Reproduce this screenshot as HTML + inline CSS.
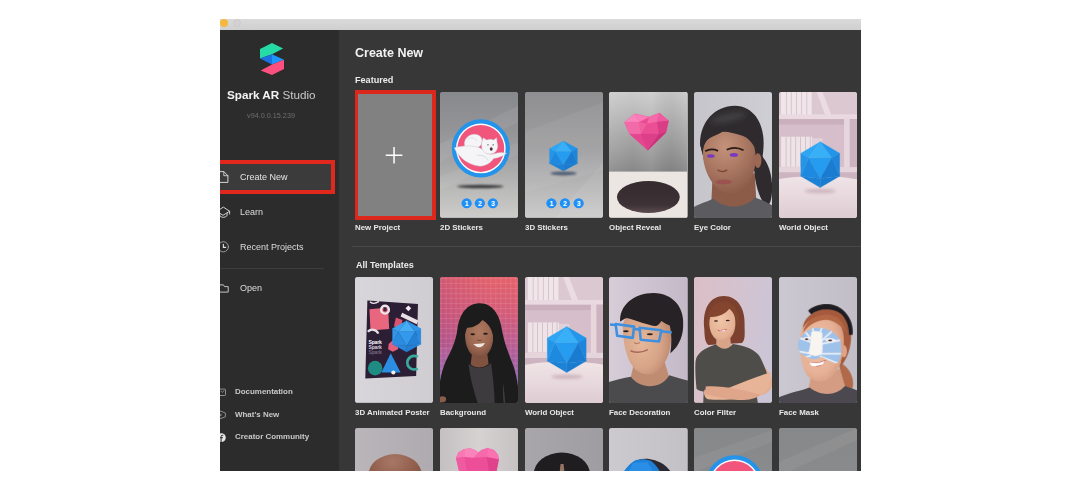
<!DOCTYPE html>
<html lang="en">
<head>
<meta charset="utf-8">
<title>Spark AR Studio</title>
<style>
html,body{margin:0;padding:0;background:#fff;}
body{width:1080px;height:490px;position:relative;overflow:hidden;font-family:"Liberation Sans",sans-serif;}
#win{filter:blur(0.5px);position:absolute;left:0;top:0;width:1080px;height:490px;clip-path:inset(19px 219.4px 19.3px 220px);}
#tbar{position:absolute;left:200px;top:9px;width:680px;height:21.2px;background:linear-gradient(#dadada 0,#dadada 10px,#cfcfcf 21.2px);}
#side{position:absolute;left:200px;top:30px;width:138.8px;height:460px;background:#2c2c2c;}
#main{position:absolute;left:338.8px;top:30px;width:542px;height:460px;background:#373737;}
.t{position:absolute;white-space:nowrap;line-height:1;will-change:transform;}
.card{position:absolute;width:78.2px;height:125.6px;border-radius:2.8px;overflow:hidden;background:#999;}
.card svg{position:absolute;left:0;top:0;width:78.2px;height:125.6px;display:block;}
.ico{position:absolute;overflow:visible;}
</style>
</head>
<body>
<div id="win">
<div id="tbar"></div>
<div style="position:absolute;left:220.4px;top:19.2px;width:8px;height:8px;border-radius:50%;background:#f6b73a;"></div>
<div style="position:absolute;left:233.9px;top:19.8px;width:6.6px;height:6.6px;border-radius:50%;background:#d4d1d4;box-shadow:0 0 0 0.5px #c4c1c4;"></div>
<div id="side"></div>
<div id="main"></div>
<div style="position:absolute;left:220px;top:162.5px;width:113px;height:29px;background:#3b3b3b;"></div>
<svg class="ico" style="left:259.9px;top:42.7px;" width="24" height="32.2" viewBox="259.9 42.7 24 32.2">
  <polygon points="259.9,48.7 271.9,42.7 283,48.3 271.9,53.9 259.9,58.1" fill="#25dba6"/>
  <polygon points="259.9,58.1 271.9,53.9 271.9,64.1" fill="#1a73e0"/>
  <polygon points="271.9,53.9 283.9,59.4 271.9,64.1" fill="#1e95ff"/>
  <polygon points="260.6,70.1 271.9,64.1 283.9,59.4 283.9,68.8 271.9,74.8" fill="#ff4f7e"/>
</svg>
<div class="t" style="left:226.6px;top:89.4px;font-size:11.7px;color:#c9c9c9;"><b style="color:#f3f3f3;">Spark AR</b> Studio</div>
<div class="t" style="left:247px;top:111.5px;font-size:7.25px;color:#6e6e6e;">v94.0.0.15.239</div>
<div class="t" style="left:239.9px;top:172.8px;font-size:9px;color:#e4e4e4;">Create New</div>
<div class="t" style="left:239.7px;top:207.6px;font-size:9px;color:#dcdcdc;">Learn</div>
<div class="t" style="left:239.7px;top:242.9px;font-size:9px;color:#dcdcdc;">Recent Projects</div>
<div style="position:absolute;left:220px;top:267.6px;width:104px;height:1px;background:#3d3d3d;"></div>
<div class="t" style="left:239.7px;top:283.9px;font-size:9px;color:#dcdcdc;">Open</div>
<div class="t" style="left:234.8px;top:387.7px;font-size:7.95px;font-weight:bold;color:#c9c9c9;">Documentation</div>
<div class="t" style="left:234.8px;top:410.6px;font-size:7.95px;font-weight:bold;color:#c9c9c9;">What's New</div>
<div class="t" style="left:234.8px;top:433px;font-size:7.95px;font-weight:bold;color:#c9c9c9;">Creator Community</div>
<svg class="ico" style="left:210px;top:160px;" width="30" height="290" viewBox="210 160 30 290" fill="none" stroke-linejoin="round" stroke-linecap="round">
  <g stroke="#d6d3d8" stroke-width="1">
    <path d="M216,171.6 H223.8 L227.9,175.7 V182.4 H216"/>
    <path d="M223.8,171.6 V175.7 H227.9" stroke-width="0.9"/>
  </g>
  <g stroke="#cfcfcf" stroke-width="1">
    <path d="M217,211.2 L223.35,207.1 L229.6,211.2 L223.35,215.1 Z"/>
    <path d="M219.6,213.4 V215.6 Q223.35,219.2 227.1,215.6 V213.4"/>
    <path d="M229.6,211.4 V214"/>
  </g>
  <circle cx="223.35" cy="246.8" r="5.1" stroke="#9c9c9c" stroke-width="1"/>
  <path d="M223.35,244.2 V247.4 H225.7" stroke="#e4e4e4" stroke-width="1.1"/>
  <path d="M216,284.9 H223.5 L224.5,286.6 H228.2 V292.1 H216" stroke="#c4c4c4" stroke-width="1"/>
  <g stroke="#a9a9a9" stroke-width="0.8">
    <rect x="216.5" y="389.1" width="9" height="6.4" rx="0.8"/>
    <path d="M221,391.2 L222.2,392.4 L224,390.8" stroke-width="0.7"/>
    <path d="M221,411.2 L225.4,413 V416.8 L221,418.5 L216.6,416.8 V413 Z"/>
    <path d="M220.2,414 L221.6,414.9 L220.2,415.8" stroke-width="0.7"/>
  </g>
  <circle cx="221.4" cy="437.6" r="4.4" fill="#e6e6e6" stroke="none"/>
  <path d="M222.9,435.3 H222.1 Q221.1,435.3 221.1,436.4 V442 M220,437.7 H222.6" stroke="#2c2c2c" stroke-width="1"/>
</svg>
<div class="t" style="left:355.0px;top:47.32px;font-size:12.5px;font-weight:bold;color:#f2f2f2;">Create New</div>
<div class="t" style="left:355.0px;top:75.60px;font-size:9.1px;font-weight:bold;color:#ededed;">Featured</div>
<div class="t" style="left:355.6px;top:260.78px;font-size:9.0px;font-weight:bold;color:#ededed;">All Templates</div>
<div style="position:absolute;left:352px;top:246px;width:509px;height:1px;background:#484848;"></div>
<div class="card" style="left:355.28px;top:92.0px;"><svg viewBox="0 0 78.1 125.3" preserveAspectRatio="none"><rect width="78.1" height="125.3" fill="#818181"/><path d="M30.7 63.1H47.3M39 54.9V71.3" stroke="#fff" stroke-width="1.5" fill="none"/></svg>
</div>
<div class="card" style="left:355.28px;top:277.0px;"><svg viewBox="0 0 78.1 125.3" preserveAspectRatio="none">
<defs>
<linearGradient id="g21" x1="0" y1="0" x2="1" y2="0"><stop offset="0" stop-color="#d8d6da"/><stop offset="1" stop-color="#cfcdd2"/></linearGradient>
</defs>
<rect width="78.1" height="125.3" fill="url(#g21)"/>
<g transform="translate(-0.6,-1.1) scale(0.2592)">
<polygon points="50,95 245,108 238,385 42,395" fill="#2b1e35"/>
<polygon points="58,128 130,122 134,204 62,210" fill="#e9667f"/>
<circle cx="118" cy="130" r="15" fill="none" stroke="#efe6ea" stroke-width="9"/>
<circle cx="118" cy="130" r="7" fill="#3a2a40"/>
<path d="M60,100 Q75,112 95,98" stroke="#e8e0e6" stroke-width="5" fill="none"/>
<path d="M52,215 A24,24 0 0 1 92,222" stroke="#e6dee4" stroke-width="9" fill="none"/>
<polygon points="184,142 246,172 240,186 178,156" fill="#eadfe6"/>
<polygon points="208,114 219,125 208,136 197,125" fill="#f2ecf0"/>
<polygon points="160,160 185,170 180,200 152,195" fill="#d9546f"/>
<polygon points="132,262 150,246 170,258 168,282 148,292 130,282" fill="#e45f7c"/>
<circle cx="80" cy="355" r="28" fill="#1f8c84"/>
<polygon points="140,298 178,372 104,372" fill="#2b8ee2"/>
<circle cx="150" cy="372" r="8" fill="#f4f0f2"/>
<path d="M244,312 A26,26 0 1 0 244,356" stroke="#3aa99d" stroke-width="11" fill="none"/>
<g font-family="Liberation Sans, sans-serif" font-size="19.5" font-weight="bold" letter-spacing="-0.5"><text x="54" y="262" fill="#fff">Spark</text><text x="54" y="281" fill="#d9d2dc">Spark</text><text x="54" y="300" fill="#75697d">Spark</text></g>
</g>
<g><polygon points="43.08,54.52 60.12,54.52 51.60,43.60" fill="#46acf4" stroke="#46acf4" stroke-width="0.25"/><polygon points="43.08,54.52 60.12,54.52 51.60,68.56" fill="#3399ec" stroke="#3399ec" stroke-width="0.25"/><polygon points="43.08,54.52 51.60,43.60 37.40,51.40" fill="#3ba2f0" stroke="#3ba2f0" stroke-width="0.25"/><polygon points="60.12,54.52 51.60,43.60 65.80,51.40" fill="#2f95e8" stroke="#2f95e8" stroke-width="0.25"/><polygon points="43.08,54.52 37.40,51.40 37.40,67.00" fill="#3196e8" stroke="#3196e8" stroke-width="0.25"/><polygon points="60.12,54.52 65.80,51.40 65.80,67.00" fill="#2889de" stroke="#2889de" stroke-width="0.25"/><polygon points="43.08,54.52 37.40,67.00 51.60,68.56" fill="#2b8ce0" stroke="#2b8ce0" stroke-width="0.25"/><polygon points="60.12,54.52 65.80,67.00 51.60,68.56" fill="#2380d4" stroke="#2380d4" stroke-width="0.25"/><polygon points="51.60,68.56 37.40,67.00 51.60,74.80" fill="#2785da" stroke="#2785da" stroke-width="0.25"/><polygon points="51.60,68.56 65.80,67.00 51.60,74.80" fill="#2380d4" stroke="#2380d4" stroke-width="0.25"/></g>
</svg>
</div>
<div class="card" style="left:355.28px;top:428.1px;"><svg viewBox="0 0 78.1 125.3" preserveAspectRatio="none">
<defs><linearGradient id="g31" x1="0" y1="0" x2="1" y2="0"><stop offset="0" stop-color="#b9b5b9"/><stop offset="1" stop-color="#aeaaaf"/></linearGradient>
<radialGradient id="h31" cx="0.45" cy="0.18" r="0.8"><stop offset="0" stop-color="#a87866"/><stop offset="0.5" stop-color="#93604f"/><stop offset="1" stop-color="#7a4a3a"/></radialGradient>
<filter id="e31"><feGaussianBlur stdDeviation="0.5"/></filter></defs>
<rect width="78.1" height="125.3" fill="url(#g31)"/>
<ellipse cx="40.1" cy="46.5" rx="26.5" ry="20.5" fill="url(#h31)" filter="url(#e31)"/>
</svg>
</div>
<div class="t" style="left:355.3px;top:224.21px;font-size:7.9px;font-weight:bold;color:#e9e9e9;">New Project</div>
<div class="t" style="left:355.3px;top:408.51px;font-size:7.9px;font-weight:bold;color:#e9e9e9;">3D Animated Poster</div>
<div class="card" style="left:440.00px;top:92.0px;"><svg viewBox="0 0 78.1 125.3" preserveAspectRatio="none">
<defs>
<linearGradient id="g12" x1="0" y1="0" x2="0" y2="1"><stop offset="0" stop-color="#87898d"/><stop offset="0.3" stop-color="#949497"/><stop offset="0.55" stop-color="#a4a4a6"/><stop offset="0.78" stop-color="#babab9"/><stop offset="1" stop-color="#cdccca"/></linearGradient>
<filter id="b12" x="-20%" y="-200%" width="140%" height="500%"><feGaussianBlur stdDeviation="0.9"/></filter>
</defs>
<rect width="78.1" height="125.3" fill="url(#g12)"/>
<polygon points="0,52 78.1,14 78.1,30 0,70" fill="#fff" opacity="0.07"/>
<polygon points="0,85 78.1,50 78.1,62 0,98" fill="#fff" opacity="0.06"/>
<ellipse cx="40.3" cy="94.3" rx="23" ry="1.7" fill="#2e2e30" filter="url(#b12)" opacity="0.9"/>
<circle cx="40.8" cy="56.3" r="29" fill="#2493ea"/>
<circle cx="40.8" cy="56.3" r="24.8" fill="#fff"/>
<circle cx="40.8" cy="56.3" r="23.4" fill="#f2557c"/>
<g transform="translate(7.8,22) scale(0.1347)">
<g fill="#f5f5f7" stroke="#c4c4ce" stroke-width="3" stroke-linejoin="round">
<path d="M128,246 C110,200 140,158 190,150 C235,146 262,176 252,214 C246,240 222,252 200,246 Z"/>
<path d="M48,250 C90,236 150,232 200,240 C240,246 262,262 280,285 C300,300 330,300 350,292 C380,284 410,282 436,290 C410,312 372,326 340,330 C320,362 280,386 240,386 C180,384 120,350 84,306 C66,286 54,268 48,250 Z"/>
<path d="M252,212 L262,176 L288,192 C304,184 326,184 340,192 L362,176 L366,214 C376,240 368,272 344,288 C318,302 280,298 262,274 C250,256 248,232 252,212 Z"/>
</g>
<path d="M150,186 C170,170 205,172 215,200" stroke="#c4c4ce" stroke-width="3" fill="none"/>
<path d="M214,306 C250,300 290,316 300,346" stroke="#b9b9c4" stroke-width="3.5" fill="none"/>
<circle cx="298" cy="228" r="5" fill="#333"/><circle cx="336" cy="228" r="5" fill="#333"/>
<ellipse cx="322" cy="258" rx="11" ry="13" fill="#4a3340"/>
<ellipse cx="322" cy="244" rx="5" ry="3.5" fill="#e58aa0"/>
</g>
<g fill="#1e90f5"><circle cx="26.6" cy="111" r="5.1"/><circle cx="39.8" cy="111" r="5.1"/><circle cx="52.8" cy="111" r="5.1"/></g>
<g fill="#fff" font-family="Liberation Sans, sans-serif" font-size="7" font-weight="bold" text-anchor="middle"><text x="26.6" y="113.5">1</text><text x="39.8" y="113.5">2</text><text x="52.8" y="113.5">3</text></g>
</svg>
</div>
<div class="card" style="left:440.00px;top:277.0px;"><svg viewBox="0 0 78.1 125.3" preserveAspectRatio="none">
<defs>
<linearGradient id="g22" x1="0" y1="0" x2="0" y2="1"><stop offset="0" stop-color="#e4626a"/><stop offset="0.3" stop-color="#d25c7a"/><stop offset="0.6" stop-color="#b05e98"/><stop offset="0.85" stop-color="#8c68b6"/><stop offset="1" stop-color="#7c6cc0"/></linearGradient>
<linearGradient id="h22" x1="0" y1="0" x2="1" y2="0"><stop offset="0" stop-color="#a8447e" stop-opacity="0.32"/><stop offset="0.65" stop-color="#b04a86" stop-opacity="0"/></linearGradient>
<pattern id="p22" width="4.97" height="4.97" patternUnits="userSpaceOnUse" x="0.6" y="1.1"><path d="M0,0.25H4.97M0.25,0V4.97" stroke="#ffd6dc" stroke-opacity="0.36" stroke-width="0.45" fill="none"/></pattern>
<radialGradient id="s22" cx="0.5" cy="0.35" r="0.7"><stop offset="0" stop-color="#b07a60"/><stop offset="0.6" stop-color="#9a6751"/><stop offset="1" stop-color="#74493a"/></radialGradient>
<filter id="f22"><feGaussianBlur stdDeviation="1.6"/></filter>
<filter id="e22"><feGaussianBlur stdDeviation="1.4"/></filter>
</defs>
<rect width="78.1" height="125.3" fill="url(#g22)"/>
<rect width="78.1" height="70" fill="url(#h22)"/>
<rect width="78.1" height="125.3" fill="url(#p22)"/>
<g transform="scale(0.2552)" filter="url(#e22)">
<path d="M152,103 C206,100 236,150 244,215 C254,270 276,315 290,355 C302,395 308,440 312,500 L-6,500 C-8,440 0,385 22,330 C46,285 62,250 68,205 C76,150 100,106 152,103 Z" fill="#1e1b1c"/>
<path d="M112,340 C140,362 175,360 200,336 C230,345 250,380 256,500 L100,500 C98,420 100,370 112,340 Z" fill="#3c3b3e"/>
<path d="M126,292 L184,292 L190,340 C168,358 140,358 120,342 Z" fill="#7f5241"/>
<path d="M98,228 C98,186 120,162 154,162 C188,162 208,188 208,236 C208,278 186,316 154,316 C120,316 98,274 98,228 Z" fill="url(#s22)"/>
<path d="M92,262 C82,200 108,140 154,138 C200,140 222,200 212,262 C210,218 196,184 166,168 C150,190 122,200 106,198 C98,215 94,240 92,262 Z" fill="#1e1b1c"/>
<g filter="url(#f22)">
<path d="M130,262 Q152,262 176,258 Q158,290 130,262 Z" fill="#f1e6e0"/>
<ellipse cx="128" cy="224" rx="9" ry="4" fill="#2a1a18"/><ellipse cx="178" cy="222" rx="9" ry="4" fill="#2a1a18"/>
<path d="M146,246 Q154,251 162,246" stroke="#6e4536" stroke-width="4" fill="none"/>
</g>
<path d="M56,330 C70,380 90,430 84,500 L150,500 C130,440 116,385 112,340 Z M258,330 C252,380 240,430 250,500 L214,500 C214,440 206,385 200,336 Z" fill="#1e1b1c"/>
<ellipse cx="10" cy="478" rx="14" ry="12" fill="#8a5c4a"/>
</g>
</svg>
</div>
<div class="card" style="left:440.00px;top:428.1px;"><svg viewBox="0 0 78.1 125.3" preserveAspectRatio="none">
<defs><linearGradient id="g32" x1="0" y1="0" x2="1" y2="0"><stop offset="0" stop-color="#c4c0c1"/><stop offset="0.5" stop-color="#d6d2d2"/><stop offset="1" stop-color="#c6c2c3"/></linearGradient></defs>
<rect width="78.1" height="125.3" fill="url(#g32)"/>
<g stroke-width="0.25">
<polygon points="16.1,30.0 18.5,24.5 24.0,21.3 30.3,20.5 35.8,22.6 38.2,24.8 41.3,22.1 47.6,20.1 53.9,22.1 57.8,26.8 58.6,31.5 56.3,43.3 38.2,60.7 19.3,43.3" fill="#ee4f98" stroke="#ee4f98"/>
<polygon points="16.1,30.0 18.5,24.5 24.0,21.3 24.8,29.2" fill="#f978b4" stroke="#f978b4"/>
<polygon points="24.0,21.3 30.3,20.5 35.8,22.6 38.2,24.8 33.4,30.0 24.8,29.2" fill="#fb84bc" stroke="#fb84bc"/>
<polygon points="38.2,24.8 41.3,22.1 47.6,20.1 46.8,29.2 33.4,30.0" fill="#f66aab" stroke="#f66aab"/>
<polygon points="47.6,20.1 53.9,22.1 57.8,26.8 58.6,31.5 46.8,29.2" fill="#f873b0" stroke="#f873b0"/>
<polygon points="16.1,30.0 24.8,29.2 27.1,43.3 19.3,43.3" fill="#f05aa0" stroke="#f05aa0"/>
<polygon points="24.8,29.2 33.4,30.0 46.8,29.2 49.2,43.3 27.1,43.3" fill="#ec4e97" stroke="#ec4e97"/>
<polygon points="46.8,29.2 58.6,31.5 56.3,43.3 49.2,43.3" fill="#e0428b" stroke="#e0428b"/>
</g>
</svg>
</div>
<div class="t" style="left:440.0px;top:224.21px;font-size:7.9px;font-weight:bold;color:#e9e9e9;">2D Stickers</div>
<div class="t" style="left:440.0px;top:408.51px;font-size:7.9px;font-weight:bold;color:#e9e9e9;">Background</div>
<div class="card" style="left:524.72px;top:92.0px;"><svg viewBox="0 0 78.1 125.3" preserveAspectRatio="none">
<defs>
<linearGradient id="g13" x1="0" y1="0" x2="0" y2="1"><stop offset="0" stop-color="#8f8f91"/><stop offset="0.45" stop-color="#9f9fa1"/><stop offset="0.72" stop-color="#b4b4b5"/><stop offset="1" stop-color="#cbcbcb"/></linearGradient>
<filter id="b13" x="-30%" y="-300%" width="160%" height="700%"><feGaussianBlur stdDeviation="1.3"/></filter>
</defs>
<rect width="78.1" height="125.3" fill="url(#g13)"/>
<polygon points="0,40 78.1,10 78.1,78 0,100" fill="#fff" opacity="0.05"/>
<polygon points="30,125.3 78.1,70 78.1,125.3" fill="#fff" opacity="0.07"/>
<ellipse cx="38.5" cy="81.2" rx="13" ry="2" fill="#3c4f66" filter="url(#b13)" opacity="0.85"/>
<g><polygon points="30.06,59.43 46.74,59.43 38.40,49.00" fill="#38b0f8" stroke="#38b0f8" stroke-width="0.25"/><polygon points="30.06,59.43 46.74,59.43 38.40,72.84" fill="#259cf0" stroke="#259cf0" stroke-width="0.25"/><polygon points="30.06,59.43 38.40,49.00 24.50,56.45" fill="#2ea6f4" stroke="#2ea6f4" stroke-width="0.25"/><polygon points="46.74,59.43 38.40,49.00 52.30,56.45" fill="#2196ea" stroke="#2196ea" stroke-width="0.25"/><polygon points="30.06,59.43 24.50,56.45 24.50,71.35" fill="#2496ea" stroke="#2496ea" stroke-width="0.25"/><polygon points="46.74,59.43 52.30,56.45 52.30,71.35" fill="#1c86dc" stroke="#1c86dc" stroke-width="0.25"/><polygon points="30.06,59.43 24.50,71.35 38.40,72.84" fill="#1d8ae0" stroke="#1d8ae0" stroke-width="0.25"/><polygon points="46.74,59.43 52.30,71.35 38.40,72.84" fill="#197cd0" stroke="#197cd0" stroke-width="0.25"/><polygon points="38.40,72.84 24.50,71.35 38.40,78.80" fill="#1c82d6" stroke="#1c82d6" stroke-width="0.25"/><polygon points="38.40,72.84 52.30,71.35 38.40,78.80" fill="#197cd0" stroke="#197cd0" stroke-width="0.25"/></g>
<g fill="#1e90f5"><circle cx="26.4" cy="111" r="5.1"/><circle cx="39.9" cy="111" r="5.1"/><circle cx="53.6" cy="111" r="5.1"/></g>
<g fill="#fff" font-family="Liberation Sans, sans-serif" font-size="7" font-weight="bold" text-anchor="middle"><text x="26.4" y="113.5">1</text><text x="39.9" y="113.5">2</text><text x="53.6" y="113.5">3</text></g>
</svg>
</div>
<div class="card" style="left:524.72px;top:277.0px;"><svg viewBox="0 0 78.1 125.3" preserveAspectRatio="none">
<defs>
<linearGradient id="t23" x1="0" y1="0" x2="0" y2="1"><stop offset="0" stop-color="#f0e4e7"/><stop offset="1" stop-color="#dccbd1"/></linearGradient>
<filter id="b23" x="-30%" y="-100%" width="160%" height="300%"><feGaussianBlur stdDeviation="6"/></filter>
<filter id="k23"><feGaussianBlur stdDeviation="1.6"/></filter>
</defs>
<rect width="78.1" height="125.3" fill="#d9c3cd"/>
<g transform="translate(-0.8,-0.3) scale(0.2592)">
<g filter="url(#k23)">
<rect x="0" y="0" width="320" height="95" fill="#dcc8d1"/>
<rect x="14" y="0" width="118" height="92" fill="#f0e5e9"/>
<g fill="#d3bcc6"><rect x="33" y="0" width="3" height="92"/><rect x="52" y="0" width="3" height="92"/><rect x="72" y="0" width="3" height="92"/><rect x="92" y="0" width="3" height="92"/><rect x="112" y="0" width="3" height="92"/></g>
<polygon points="150,0 172,0 208,92 184,92" fill="#eadce2"/>
<rect x="0" y="90" width="320" height="18" fill="#ead9e0"/>
<rect x="0" y="108" width="320" height="22" fill="#c9b0bc"/>
<rect x="0" y="130" width="320" height="170" fill="#d6bfca"/>
<rect x="14" y="176" width="120" height="116" fill="#eee3e7"/>
<rect x="134" y="182" width="40" height="110" fill="#e2d1d9"/>
<g fill="#cfb8c2"><rect x="32" y="176" width="3" height="116"/><rect x="50" y="176" width="3" height="116"/><rect x="69" y="176" width="3" height="116"/><rect x="88" y="176" width="3" height="116"/><rect x="107" y="176" width="3" height="116"/><rect x="125" y="176" width="3" height="116"/></g>
<rect x="257" y="100" width="22" height="205" fill="#e8d6de"/>
<rect x="279" y="108" width="41" height="190" fill="#cdb3bf"/>
<rect x="0" y="293" width="320" height="20" fill="#e6d4db"/>
<rect x="0" y="313" width="320" height="30" fill="#ccb4c0"/>
<path d="M-20,345 C60,322 250,322 330,345 L330,500 L-20,500 Z" fill="url(#t23)"/>
</g>
<ellipse cx="165" cy="385" rx="60" ry="9" fill="#b99aa6" opacity="0.55" filter="url(#b23)"/>
</g>
<g><polygon points="30.06,65.53 53.34,65.53 41.70,49.50" fill="#38b0f8" stroke="#38b0f8" stroke-width="0.25"/><polygon points="30.06,65.53 53.34,65.53 41.70,86.14" fill="#259cf0" stroke="#259cf0" stroke-width="0.25"/><polygon points="30.06,65.53 41.70,49.50 22.30,60.95" fill="#2ea6f4" stroke="#2ea6f4" stroke-width="0.25"/><polygon points="53.34,65.53 41.70,49.50 61.10,60.95" fill="#2196ea" stroke="#2196ea" stroke-width="0.25"/><polygon points="30.06,65.53 22.30,60.95 22.30,83.85" fill="#2496ea" stroke="#2496ea" stroke-width="0.25"/><polygon points="53.34,65.53 61.10,60.95 61.10,83.85" fill="#1c86dc" stroke="#1c86dc" stroke-width="0.25"/><polygon points="30.06,65.53 22.30,83.85 41.70,86.14" fill="#1d8ae0" stroke="#1d8ae0" stroke-width="0.25"/><polygon points="53.34,65.53 61.10,83.85 41.70,86.14" fill="#197cd0" stroke="#197cd0" stroke-width="0.25"/><polygon points="41.70,86.14 22.30,83.85 41.70,95.30" fill="#1c82d6" stroke="#1c82d6" stroke-width="0.25"/><polygon points="41.70,86.14 61.10,83.85 41.70,95.30" fill="#197cd0" stroke="#197cd0" stroke-width="0.25"/></g>
</svg>
</div>
<div class="card" style="left:524.72px;top:428.1px;"><svg viewBox="0 0 78.1 125.3" preserveAspectRatio="none">
<defs><linearGradient id="g33" x1="0" y1="0" x2="1" y2="0"><stop offset="0" stop-color="#a9a6ab"/><stop offset="1" stop-color="#9f9ca2"/></linearGradient></defs>
<rect width="78.1" height="125.3" fill="url(#g33)"/>
<ellipse cx="36.8" cy="46" rx="28" ry="21.5" fill="#1f1d20"/>
<path d="M35.5,36 L38.5,36 L39.5,45 L34.5,45Z" fill="#b58a78" opacity="0.8"/>
</svg>
</div>
<div class="t" style="left:524.7px;top:224.21px;font-size:7.9px;font-weight:bold;color:#e9e9e9;">3D Stickers</div>
<div class="t" style="left:524.7px;top:408.51px;font-size:7.9px;font-weight:bold;color:#e9e9e9;">World Object</div>
<div class="card" style="left:609.44px;top:92.0px;"><svg viewBox="0 0 78.1 125.3" preserveAspectRatio="none">
<defs>
<linearGradient id="g14" x1="0" y1="0" x2="0" y2="1"><stop offset="0" stop-color="#cbcbcb"/><stop offset="0.35" stop-color="#b4b4b4"/><stop offset="0.75" stop-color="#9a9a9a"/><stop offset="1" stop-color="#878787"/></linearGradient>
<linearGradient id="h14" x1="0" y1="0" x2="1" y2="0"><stop offset="0" stop-color="#fff" stop-opacity="0.10"/><stop offset="0.3" stop-color="#fff" stop-opacity="0"/><stop offset="0.55" stop-color="#fff" stop-opacity="0.08"/><stop offset="0.8" stop-color="#000" stop-opacity="0.04"/><stop offset="1" stop-color="#fff" stop-opacity="0.06"/></linearGradient>
<linearGradient id="e14" x1="0" y1="0" x2="0" y2="1"><stop offset="0" stop-color="#342b2e"/><stop offset="0.75" stop-color="#3d3236"/><stop offset="1" stop-color="#5d4c50"/></linearGradient>
</defs>
<rect width="78.1" height="125.3" fill="#ece6e2"/>
<rect width="78.1" height="79.4" fill="url(#g14)"/>
<rect width="78.1" height="79.4" fill="url(#h14)"/>
<ellipse cx="39.3" cy="104.8" rx="31.4" ry="15.9" fill="url(#e14)"/>
<g stroke-width="0.2">
<polygon points="15.4,30.1 25.8,21.8 40.1,24.9 50.4,21 59.5,28.8 56.9,40.5 38.8,58.1 20.6,41.8" fill="#e94c94" stroke="#e94c94"/>
<polygon points="15.4,30.1 25.8,21.8 30,30" fill="#f985bb" stroke="#f985bb"/>
<polygon points="25.8,21.8 40.1,24.9 30,30" fill="#fb7cb6" stroke="#fb7cb6"/>
<polygon points="40.1,24.9 50.4,21 48,30 38,32" fill="#f56aa9" stroke="#f56aa9"/>
<polygon points="50.4,21 59.5,28.8 48,30" fill="#ee5a9d" stroke="#ee5a9d"/>
<polygon points="15.4,30.1 30,30 32,42 20.6,41.8" fill="#f36aa8" stroke="#f36aa8"/>
<polygon points="30,30 38,32 32,42" fill="#f0609f" stroke="#f0609f"/>
<polygon points="38,32 48,30 50,42 32,42" fill="#ea4f96" stroke="#ea4f96"/>
<polygon points="48,30 59.5,28.8 56.9,40.5 50,42" fill="#d93d86" stroke="#d93d86"/>
<polygon points="20.6,41.8 32,42 38.8,58.1" fill="#e4468f" stroke="#e4468f"/>
<polygon points="32,42 50,42 38.8,58.1" fill="#dd3f88" stroke="#dd3f88"/>
<polygon points="50,42 56.9,40.5 38.8,58.1" fill="#c9327a" stroke="#c9327a"/>
</g>
</svg>
</div>
<div class="card" style="left:609.44px;top:277.0px;"><svg viewBox="0 0 78.1 125.3" preserveAspectRatio="none">
<defs>
<linearGradient id="g24" x1="0" y1="0" x2="1" y2="0"><stop offset="0" stop-color="#d6cdd9"/><stop offset="1" stop-color="#c4b9c8"/></linearGradient>
<radialGradient id="s24" cx="0.38" cy="0.5" r="0.75"><stop offset="0" stop-color="#e6b89b"/><stop offset="0.55" stop-color="#d6a386"/><stop offset="1" stop-color="#b07d64"/></radialGradient>
<filter id="f24"><feGaussianBlur stdDeviation="1.6"/></filter>
<filter id="e24"><feGaussianBlur stdDeviation="1.3"/></filter>
</defs>
<rect width="78.1" height="125.3" fill="url(#g24)"/>
<g transform="scale(0.2552)" filter="url(#e24)">
<path d="M96,345 L216,325 L238,400 C200,445 120,445 82,405 Z" fill="#bf8c72"/>
<ellipse cx="257" cy="250" rx="15" ry="31" fill="#c9957a"/>
<path d="M54,200 C54,160 80,135 150,130 C215,132 244,170 244,225 C244,290 226,335 196,362 C170,388 130,386 106,364 C76,336 56,280 54,200 Z" fill="url(#s24)"/>
<path d="M44,178 C38,114 95,63 175,63 C250,65 298,118 290,197 C288,240 268,275 240,298 C246,262 246,225 238,190 C225,185 212,176 205,172 C198,184 190,190 184,192 C150,188 110,170 70,160 C58,164 50,170 44,175 Z" fill="#272125"/>
<g filter="url(#f24)">
<path d="M84,288 Q118,302 152,284" stroke="#a8685c" stroke-width="6" fill="none"/>
<path d="M98,256 Q108,264 122,256" stroke="#b4826a" stroke-width="5" fill="none"/>
<ellipse cx="66" cy="212" rx="11" ry="4" fill="#2a2020"/><ellipse cx="160" cy="224" rx="12" ry="4" fill="#2a2020"/>
</g>
<g fill="none" stroke="#3e8fe0" stroke-width="10" stroke-linejoin="round">
<path d="M26,184 L98,194 L93,238 L32,230 Z"/>
<path d="M120,198 L205,208 L196,252 L124,245 Z"/>
<path d="M98,202 L120,206"/>
<path d="M26,188 L4,186"/>
<path d="M205,212 L246,217"/>
</g>
<path d="M-5,412 C30,402 55,394 86,390 C120,440 205,440 236,384 C268,394 292,400 312,406 L312,495 L-5,495 Z" fill="#4c4b4e"/>
</g>
</svg>
</div>
<div class="card" style="left:609.44px;top:428.1px;"><svg viewBox="0 0 78.1 125.3" preserveAspectRatio="none">
<defs><linearGradient id="g34" x1="0" y1="0" x2="1" y2="0"><stop offset="0" stop-color="#cdcacf"/><stop offset="1" stop-color="#c3c0c6"/></linearGradient></defs>
<rect width="78.1" height="125.3" fill="url(#g34)"/>
<path d="M30,31.5 C38,29 48,32 54,36 C58,39 61,42 63,46 L40,46 Z" fill="#2a2832"/>
<path d="M13,46 C17,40 22,34 27,32 C32,30.5 38,31 42,33 C46,36 50,41 52,46 Z" fill="#1f80d8"/>
<path d="M24,35 L38,34 L46,46 L18,46Z" fill="#2a8de6"/>
</svg>
</div>
<div class="t" style="left:609.4px;top:224.21px;font-size:7.9px;font-weight:bold;color:#e9e9e9;">Object Reveal</div>
<div class="t" style="left:609.4px;top:408.51px;font-size:7.9px;font-weight:bold;color:#e9e9e9;">Face Decoration</div>
<div class="card" style="left:694.16px;top:92.0px;"><svg viewBox="0 0 78.1 125.3" preserveAspectRatio="none">
<defs>
<linearGradient id="g15" x1="0" y1="0" x2="1" y2="0"><stop offset="0" stop-color="#c6c5cb"/><stop offset="1" stop-color="#cfced4"/></linearGradient>
<radialGradient id="s15" cx="0.42" cy="0.25" r="0.8"><stop offset="0" stop-color="#c4917a"/><stop offset="0.45" stop-color="#ad7a64"/><stop offset="1" stop-color="#8a5b49"/></radialGradient>
<filter id="f15" x="-10%" y="-10%" width="120%" height="120%"><feGaussianBlur stdDeviation="2.6"/></filter>
<filter id="h15" x="-50%" y="-200%" width="200%" height="500%"><feGaussianBlur stdDeviation="11"/></filter>
<filter id="e15"><feGaussianBlur stdDeviation="1.2"/></filter>
</defs>
<rect width="78.1" height="125.3" fill="url(#g15)"/>
<g transform="scale(0.2552)" filter="url(#e15)">
<path d="M250,235 C285,262 306,310 306,380 C304,425 296,448 280,440 C262,428 246,385 236,320 Z" fill="#2e2c2e"/>
<path d="M24,205 C22,120 80,54 160,54 C235,56 278,125 272,215 C270,262 260,296 246,312 L40,270 Z" fill="#2e2c2e"/>
<path d="M72,345 L238,318 L244,430 C200,462 115,462 68,428 Z" fill="#8c5c4a"/>
<ellipse cx="250" cy="268" rx="14" ry="29" fill="#9c6853"/>
<path d="M35,225 C38,192 60,168 100,158 C150,142 212,165 236,215 C248,262 240,322 212,358 C186,394 142,402 118,392 C84,378 56,338 44,298 C36,270 33,246 35,225 Z" fill="url(#s15)"/>
<path d="M24,205 C30,140 90,98 150,96 C215,98 264,150 262,235 C252,206 228,184 192,172 C170,163 140,156 112,154 C100,164 80,168 62,180 C44,192 36,209 34,244 Z" fill="#2e2c2e"/>
<ellipse cx="135" cy="100" rx="70" ry="16" transform="rotate(-12 135 100)" fill="#fff" opacity="0.09" filter="url(#h15)"/>
<g filter="url(#f15)">
<ellipse cx="66" cy="250" rx="15" ry="7" fill="#7838c0"/>
<ellipse cx="156" cy="246" rx="16" ry="7.5" fill="#7838c0"/>
<path d="M44,232 Q66,218 94,230" stroke="#2a1c1c" stroke-width="7" fill="none"/>
<path d="M128,226 Q160,210 194,228" stroke="#2a1c1c" stroke-width="7" fill="none"/>
<ellipse cx="116" cy="352" rx="32" ry="10" fill="#9a5350"/>
<path d="M92,304 Q110,318 130,304" stroke="#7c4a3c" stroke-width="6" fill="none"/>
</g>
<path d="M-5,452 C30,432 55,428 76,416 C120,460 200,458 238,412 C272,424 296,436 312,448 L312,495 L-5,495Z" fill="#5c5b60"/>
</g>
</svg>
</div>
<div class="card" style="left:694.16px;top:277.0px;"><svg viewBox="0 0 78.1 125.3" preserveAspectRatio="none">
<defs>
<linearGradient id="g25" x1="0" y1="0" x2="1" y2="0.25"><stop offset="0" stop-color="#dbbec6"/><stop offset="0.55" stop-color="#d4c3cf"/><stop offset="1" stop-color="#ccc5d6"/></linearGradient>
<radialGradient id="s25" cx="0.45" cy="0.4" r="0.7"><stop offset="0" stop-color="#f0c5a8"/><stop offset="0.7" stop-color="#e4b193"/><stop offset="1" stop-color="#c8917a"/></radialGradient>
<filter id="f25"><feGaussianBlur stdDeviation="1.5"/></filter>
<filter id="e25"><feGaussianBlur stdDeviation="1.3"/></filter>
</defs>
<rect width="78.1" height="125.3" fill="url(#g25)"/>
<g transform="scale(0.2552)" filter="url(#e25)">
<path d="M40,200 C32,120 66,74 116,74 C170,74 202,122 198,192 C198,222 202,245 188,258 L56,266 C40,250 42,225 40,200 Z" fill="#7b402d"/>
<path d="M88,236 L142,236 L146,284 L86,284 Z" fill="#d9a388"/>
<path d="M272,350 C290,365 304,385 306,410 C306,440 290,455 262,462 L240,400 Z" fill="#e2ae92"/>
<path d="M6,330 C10,300 36,280 86,264 C106,286 134,286 152,262 C200,268 246,286 260,316 C272,340 282,362 286,380 C270,392 250,398 236,396 L250,495 L36,495 L38,448 C28,448 18,444 10,438 C6,400 4,360 6,330 Z" fill="#4f4e49"/>
<path d="M60,185 C58,140 82,112 112,112 C146,112 164,142 162,188 C160,226 138,252 112,252 C84,252 62,226 60,185 Z" fill="url(#s25)"/>
<path d="M52,205 C44,140 76,96 118,96 C164,98 182,150 174,210 C170,172 160,142 138,124 C120,148 88,158 64,156 C58,172 54,188 52,205 Z" fill="#83452f"/>
<g filter="url(#f25)">
<path d="M90,206 Q110,210 130,202 Q112,224 90,206 Z" fill="#c7434a"/>
<path d="M98,208 Q110,211 124,206 L120,212 Q110,214 102,212Z" fill="#fff"/>
<ellipse cx="86" cy="172" rx="8" ry="3" fill="#3a2420"/><ellipse cx="132" cy="170" rx="8" ry="3" fill="#3a2420"/>
</g>
<path d="M300,372 C262,384 192,410 130,436 C98,450 58,448 42,440 C36,452 40,472 54,478 C120,484 200,476 262,460 C292,448 306,420 300,372 Z" fill="#e8b498"/>
<path d="M46,428 C100,422 200,442 262,460 C240,478 200,484 160,480 C120,474 70,466 44,458 Z" fill="#dfa68b"/>
</g>
</svg>
</div>
<div class="card" style="left:694.16px;top:428.1px;"><svg viewBox="0 0 78.1 125.3" preserveAspectRatio="none">
<defs><linearGradient id="g35" x1="0" y1="0" x2="0" y2="1"><stop offset="0" stop-color="#868789"/><stop offset="0.45" stop-color="#8b8c8e"/><stop offset="1" stop-color="#b5b5b6"/></linearGradient></defs>
<rect width="78.1" height="125.3" fill="url(#g35)"/>
<polygon points="0,30 78.1,2 78.1,14 0,44" fill="#fff" opacity="0.05"/>
<circle cx="40.5" cy="56.8" r="29.5" fill="#2493ea"/>
<circle cx="40.5" cy="56.8" r="25.3" fill="#fff"/>
<circle cx="40.5" cy="56.8" r="23.9" fill="#f2557c"/>
<ellipse cx="39" cy="49" rx="7" ry="5" fill="#f6f6f8"/>
</svg>
</div>
<div class="t" style="left:694.2px;top:224.21px;font-size:7.9px;font-weight:bold;color:#e9e9e9;">Eye Color</div>
<div class="t" style="left:694.2px;top:408.51px;font-size:7.9px;font-weight:bold;color:#e9e9e9;">Color Filter</div>
<div class="card" style="left:778.88px;top:92.0px;"><svg viewBox="0 0 78.1 125.3" preserveAspectRatio="none">
<defs>
<linearGradient id="t16" x1="0" y1="0" x2="0" y2="1"><stop offset="0" stop-color="#f0e4e7"/><stop offset="1" stop-color="#dccbd1"/></linearGradient>
<filter id="b16" x="-30%" y="-100%" width="160%" height="300%"><feGaussianBlur stdDeviation="6"/></filter>
<filter id="k16"><feGaussianBlur stdDeviation="1.6"/></filter>
</defs>
<rect width="78.1" height="125.3" fill="#d9c3cd"/>
<g transform="translate(-1.6,-1) scale(0.2592)">
<g filter="url(#k16)">
<rect x="0" y="0" width="320" height="95" fill="#dcc8d1"/>
<rect x="14" y="0" width="118" height="92" fill="#f0e5e9"/>
<g fill="#d3bcc6"><rect x="33" y="0" width="3" height="92"/><rect x="52" y="0" width="3" height="92"/><rect x="72" y="0" width="3" height="92"/><rect x="92" y="0" width="3" height="92"/><rect x="112" y="0" width="3" height="92"/></g>
<polygon points="150,0 172,0 208,92 184,92" fill="#eadce2"/>
<rect x="0" y="90" width="320" height="18" fill="#ead9e0"/>
<rect x="0" y="108" width="320" height="22" fill="#c9b0bc"/>
<rect x="0" y="130" width="320" height="170" fill="#d6bfca"/>
<rect x="14" y="176" width="120" height="116" fill="#eee3e7"/>
<rect x="134" y="182" width="40" height="110" fill="#e2d1d9"/>
<g fill="#cfb8c2"><rect x="32" y="176" width="3" height="116"/><rect x="50" y="176" width="3" height="116"/><rect x="69" y="176" width="3" height="116"/><rect x="88" y="176" width="3" height="116"/><rect x="107" y="176" width="3" height="116"/><rect x="125" y="176" width="3" height="116"/></g>
<rect x="257" y="100" width="22" height="205" fill="#e8d6de"/>
<rect x="279" y="108" width="41" height="190" fill="#cdb3bf"/>
<rect x="0" y="293" width="320" height="20" fill="#e6d4db"/>
<rect x="0" y="313" width="320" height="30" fill="#ccb4c0"/>
<path d="M-20,345 C60,322 250,322 330,345 L330,500 L-20,500 Z" fill="url(#t16)"/>
</g>
<ellipse cx="165" cy="385" rx="60" ry="9" fill="#b99aa6" opacity="0.55" filter="url(#b16)"/>
</g>
<g><polygon points="29.56,65.63 52.84,65.63 41.20,49.60" fill="#38b0f8" stroke="#38b0f8" stroke-width="0.25"/><polygon points="29.56,65.63 52.84,65.63 41.20,86.24" fill="#259cf0" stroke="#259cf0" stroke-width="0.25"/><polygon points="29.56,65.63 41.20,49.60 21.80,61.05" fill="#2ea6f4" stroke="#2ea6f4" stroke-width="0.25"/><polygon points="52.84,65.63 41.20,49.60 60.60,61.05" fill="#2196ea" stroke="#2196ea" stroke-width="0.25"/><polygon points="29.56,65.63 21.80,61.05 21.80,83.95" fill="#2496ea" stroke="#2496ea" stroke-width="0.25"/><polygon points="52.84,65.63 60.60,61.05 60.60,83.95" fill="#1c86dc" stroke="#1c86dc" stroke-width="0.25"/><polygon points="29.56,65.63 21.80,83.95 41.20,86.24" fill="#1d8ae0" stroke="#1d8ae0" stroke-width="0.25"/><polygon points="52.84,65.63 60.60,83.95 41.20,86.24" fill="#197cd0" stroke="#197cd0" stroke-width="0.25"/><polygon points="41.20,86.24 21.80,83.95 41.20,95.40" fill="#1c82d6" stroke="#1c82d6" stroke-width="0.25"/><polygon points="41.20,86.24 60.60,83.95 41.20,95.40" fill="#197cd0" stroke="#197cd0" stroke-width="0.25"/></g>
</svg>
</div>
<div class="card" style="left:778.88px;top:277.0px;"><svg viewBox="0 0 78.1 125.3" preserveAspectRatio="none">
<defs>
<linearGradient id="g26" x1="0" y1="0" x2="1" y2="0"><stop offset="0" stop-color="#cbc8d1"/><stop offset="1" stop-color="#c1bec8"/></linearGradient>
<radialGradient id="s26" cx="0.4" cy="0.45" r="0.75"><stop offset="0" stop-color="#f1c3a8"/><stop offset="0.6" stop-color="#e6b095"/><stop offset="1" stop-color="#c98e74"/></radialGradient>
<filter id="f26"><feGaussianBlur stdDeviation="1.8"/></filter>
<filter id="e26"><feGaussianBlur stdDeviation="1.3"/></filter>
<clipPath id="m26"><path d="M74,268 C76,238 98,212 135,200 C175,192 222,212 240,250 C248,282 244,318 228,338 C208,336 186,320 164,312 C150,322 130,324 116,316 C96,310 76,296 74,268 Z"/></clipPath>
</defs>
<rect width="78.1" height="125.3" fill="url(#g26)"/>
<g transform="scale(0.2552)" filter="url(#e26)">
<path d="M240,335 C268,350 294,385 290,425 C288,445 272,445 258,428 C250,402 240,372 236,348 Z" fill="#b06a48"/>
<path d="M92,215 C90,160 136,126 198,124 C255,128 288,175 282,240 C280,285 264,322 244,348 L228,220 Z" fill="#a55a3c"/>
<path d="M126,385 L238,360 L262,440 C220,472 150,472 114,442 Z" fill="#d49c82"/>
<ellipse cx="254" cy="290" rx="12" ry="24" fill="#dca68c"/>
<path d="M80,252 C80,196 118,158 172,152 C224,150 254,190 254,250 C254,312 236,366 200,396 C170,418 130,410 108,382 C90,352 80,302 80,252 Z" fill="url(#s26)"/>
<path d="M94,218 C100,176 136,150 182,146 C224,146 254,170 262,216 C240,186 214,170 184,168 C150,170 116,186 94,218 Z" fill="#b36745"/>
<path d="M114,132 C146,100 214,96 252,130 C280,156 292,190 288,226 L274,226 C274,190 262,160 240,142 C210,120 158,122 126,146 Z" fill="#1f1d20"/>
<g filter="url(#f26)">
<g clip-path="url(#m26)">
<rect x="60" y="180" width="200" height="170" fill="#9fc2ea"/>
<g stroke="#f4f6fb" stroke-width="7" fill="none" opacity="0.85">
<path d="M140,260 L70,235"/><path d="M140,260 L95,205"/><path d="M140,250 L130,190"/><path d="M150,250 L170,190"/><path d="M160,255 L215,205"/><path d="M165,262 L250,245"/>
<path d="M150,300 L250,300"/><path d="M160,310 L235,340"/><path d="M130,300 L70,290"/><path d="M125,308 L80,320"/>
</g>
</g>
<path d="M126,216 C138,208 160,210 170,220 C168,250 174,282 168,300 C150,314 126,310 114,298 C124,272 124,240 126,216 Z" fill="#f8f4f0"/>
<path d="M90,242 Q108,228 126,240 Q108,256 90,242Z M176,244 Q200,230 226,248 Q200,266 176,244Z" fill="#f6f2f3"/>
<path d="M112,332 Q146,342 184,324 Q158,372 112,332 Z" fill="#b5564e"/>
<path d="M116,333 Q148,342 180,328 L172,342 Q148,352 126,346 Z" fill="#fff"/>
<ellipse cx="108" cy="243" rx="7" ry="3.5" fill="#3a2a2a"/><ellipse cx="200" cy="248" rx="8" ry="3.5" fill="#3a2a2a"/>
</g>
<path d="M-5,472 C40,452 90,444 120,432 C160,466 225,466 258,426 C282,434 300,440 312,446 L312,495 L-5,495 Z" fill="#4b4a50"/>
</g>
</svg>
</div>
<div class="card" style="left:778.88px;top:428.1px;"><svg viewBox="0 0 78.1 125.3" preserveAspectRatio="none">
<defs><linearGradient id="g36" x1="0" y1="0" x2="0" y2="1"><stop offset="0" stop-color="#878889"/><stop offset="0.45" stop-color="#8a8b8d"/><stop offset="1" stop-color="#b5b5b6"/></linearGradient></defs>
<rect width="78.1" height="125.3" fill="url(#g36)"/>
<polygon points="0,34 78.1,0 78.1,12 0,48" fill="#fff" opacity="0.06"/>
</svg>
</div>
<div class="t" style="left:778.9px;top:224.21px;font-size:7.9px;font-weight:bold;color:#e9e9e9;">World Object</div>
<div class="t" style="left:778.9px;top:408.51px;font-size:7.9px;font-weight:bold;color:#e9e9e9;">Face Mask</div>
<div style="position:absolute;left:355.0px;top:89.7px;width:80.9px;height:130px;box-sizing:border-box;border:4.1px solid #dc271c;border-left-width:3.6px;"></div>
<div style="position:absolute;left:210px;top:159.7px;width:125.2px;height:34.5px;box-sizing:border-box;border:4.5px solid #e2271c;"></div>
</div>
</body>
</html>
